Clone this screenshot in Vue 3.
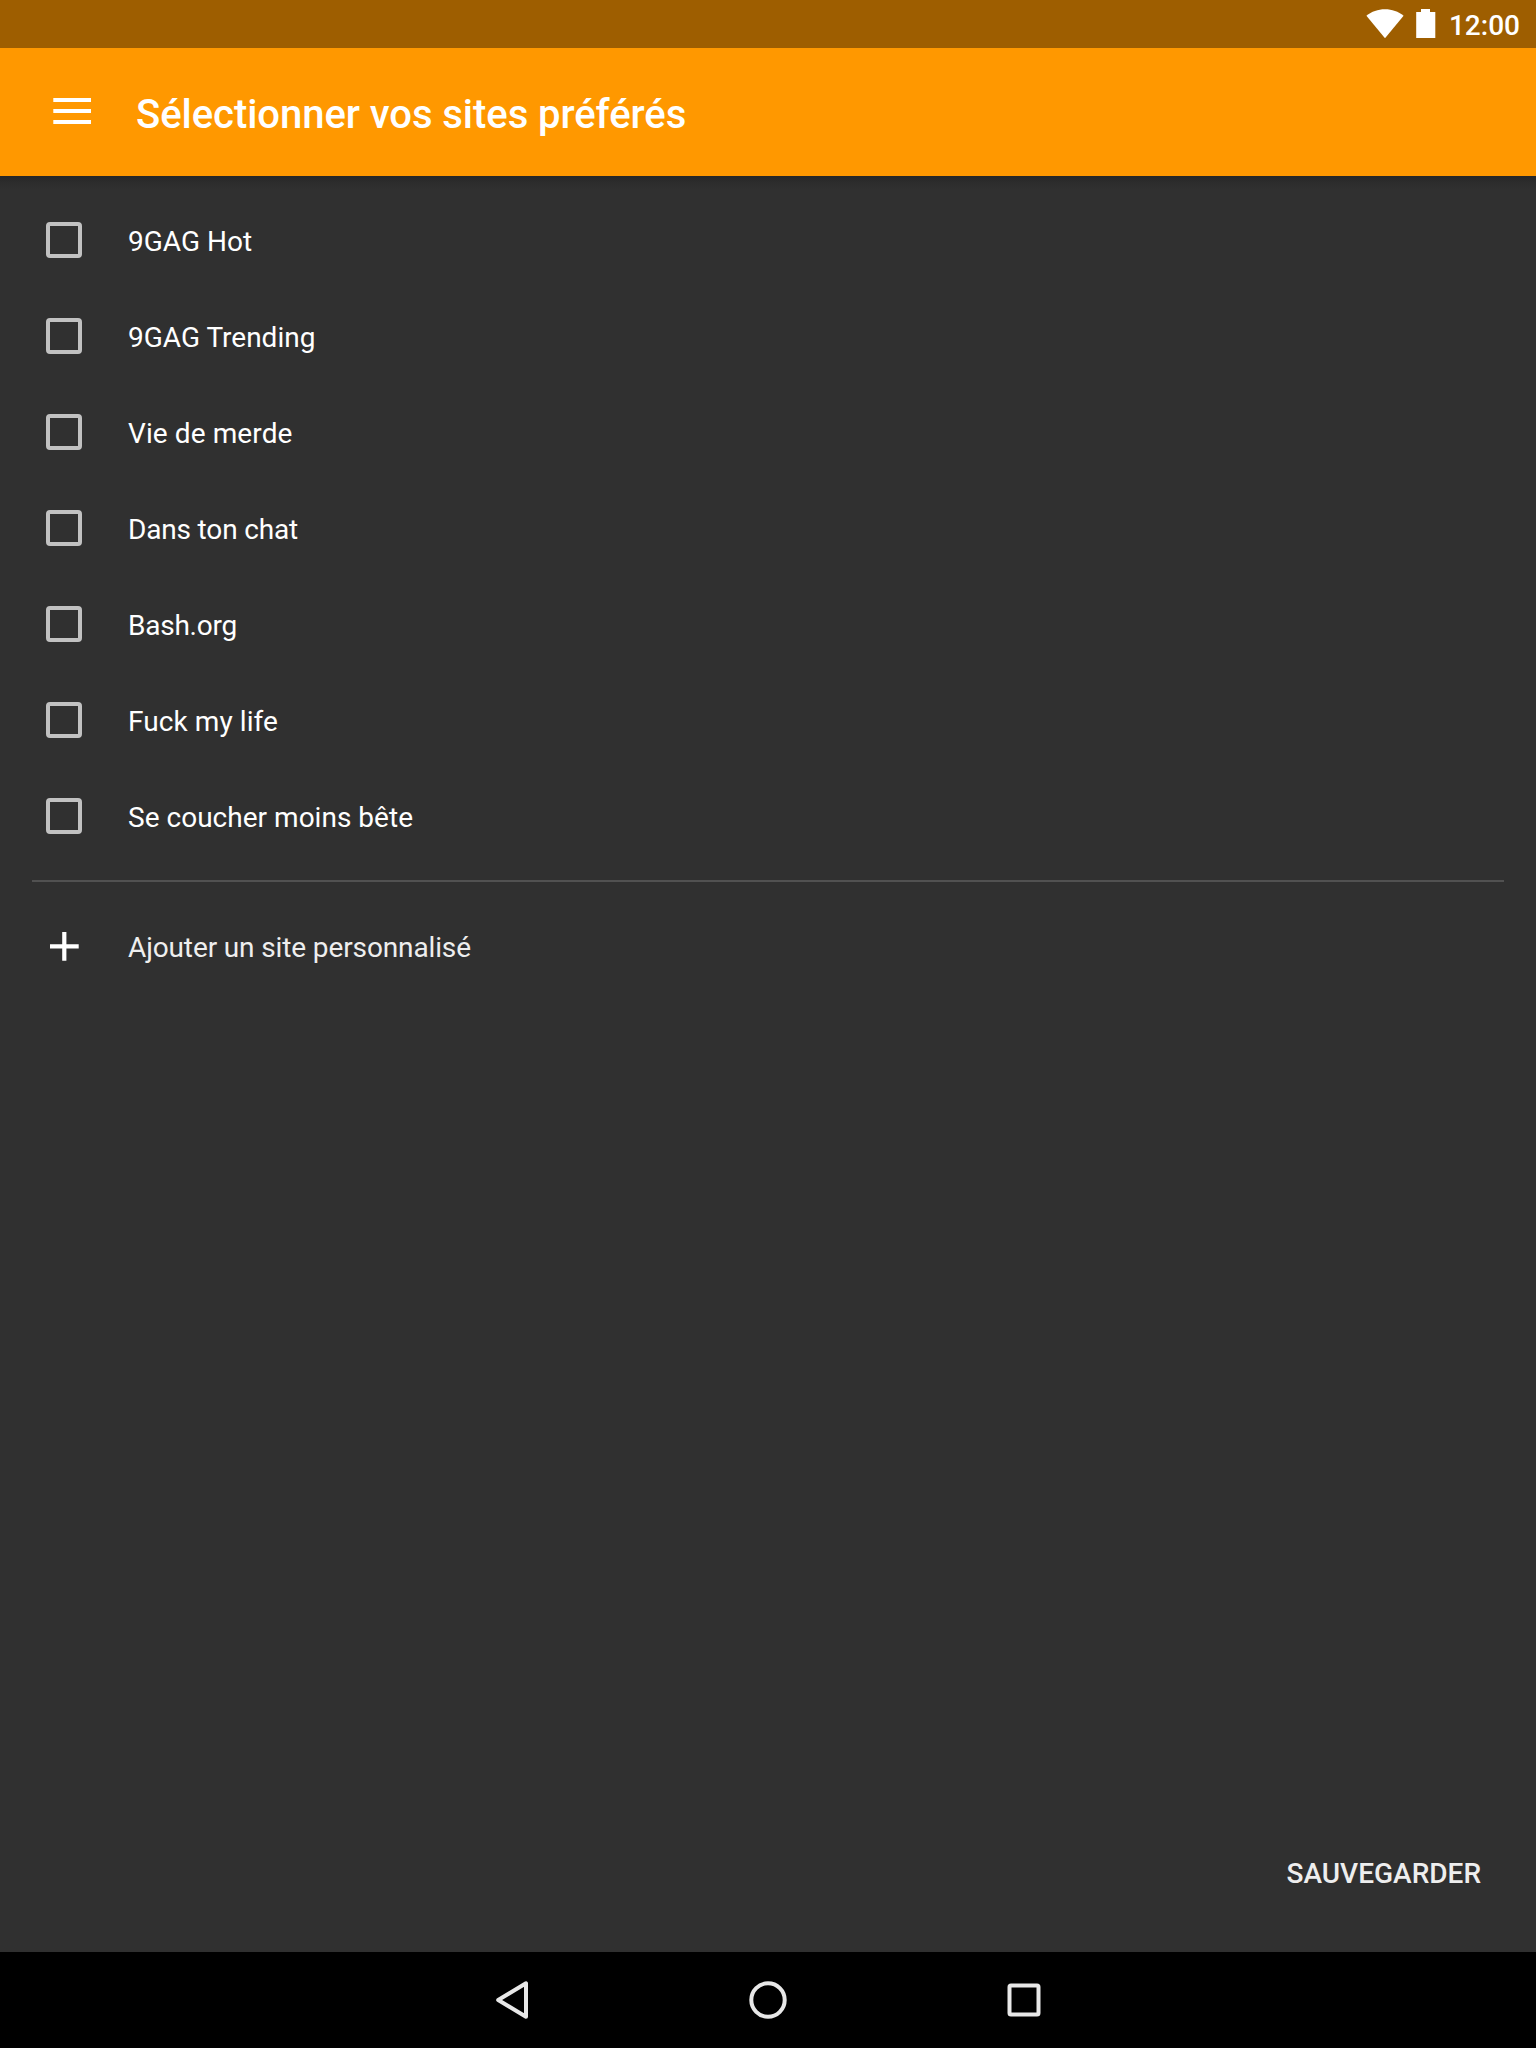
<script setup>
const sites = [
  { name: '9GAG Hot', tracking: 0 },
  { name: '9GAG Trending', tracking: 0 },
  { name: 'Vie de merde', tracking: 0.1 },
  { name: 'Dans ton chat', tracking: -0.17 },
  { name: 'Bash.org', tracking: -0.25 },
  { name: 'Fuck my life', tracking: 0.08 },
  { name: 'Se coucher moins bête', tracking: 0.02 },
]
</script>

<template>
  <div class="screen">
    <div class="status">
      <svg class="wifi" width="38" height="30" viewBox="0 0 38 30">
        <path d="M19 29.2 0.4 6.8C5.6 2.6 12 .3 19 .3s13.400 2.300 18.600 6.500Z" fill="#fff" />
      </svg>
      <svg class="battery" width="20" height="30" viewBox="0 0 20 30">
        <path d="M5 0h9v3h5.300v26H.2V3H5Z" fill="#fff" />
      </svg>
      <span class="clock">12:00</span>
    </div>

    <header class="appbar">
      <svg class="menu" width="38" height="26" viewBox="0 0 38 26">
        <path d="M.3 0H38v4H.3ZM.3 11H38v4H.3ZM.3 22H38v4H.3Z" fill="#fff" />
      </svg>
      <h1 class="title">Sélectionner vos sites préférés</h1>
    </header>

    <main class="content">
      <ul class="list">
        <li v-for="site in sites" :key="site.name" class="row">
          <span class="lead"><span class="box"></span></span>
          <span class="label" :style="{ letterSpacing: site.tracking + 'px' }">{{ site.name }}</span>
        </li>
      </ul>
      <div class="divider"></div>
      <div class="row add">
        <span class="lead">
          <svg class="plus" width="30" height="30" viewBox="0 0 30 30">
            <path d="M12.200 0h4.200v12.200h12.300v4.200H16.400v12.300h-4.200V16.400H0v-4.200h12.200Z" fill="#fff" />
          </svg>
        </span>
        <span class="label">Ajouter un site personnalisé</span>
      </div>
      <div class="actions">
        <button class="save" type="button">SAUVEGARDER</button>
      </div>
    </main>

    <nav class="navbar">
      <svg width="256" height="96" viewBox="0 0 256 96">
        <path d="M142 31.300V64.700L114.200 48Z" fill="none" stroke="#e8e8e8" stroke-width="4" stroke-linejoin="round" />
      </svg>
      <svg width="256" height="96" viewBox="0 0 256 96">
        <circle cx="128" cy="48" r="16.700" fill="none" stroke="#e8e8e8" stroke-width="4" />
      </svg>
      <svg width="256" height="96" viewBox="0 0 256 96">
        <rect x="113.500" y="33.500" width="29" height="29" rx="1.500" fill="none" stroke="#e8e8e8" stroke-width="4" />
      </svg>
    </nav>
  </div>
</template>

<style>
body {
  margin: 0;
  background: #303030;
}
</style>

<style scoped>
.screen {
  width: 1536px;
  height: 2048px;
  display: flex;
  flex-direction: column;
  background: #303030;
  color: #fff;
  font-family: Roboto, sans-serif;
  font-size: 28px;
  overflow: hidden;
}
.status {
  height: 48px;
  flex: none;
  box-sizing: border-box;
  padding-right: 16px;
  display: flex;
  align-items: flex-start;
  justify-content: flex-end;
  background: #9e5e00;
}
.wifi {
  margin: 9px 12px 0 0;
}
.battery {
  margin: 9px 13px 0 0;
}
.clock {
  font-weight: 500;
  line-height: 34px;
  margin-top: 9px;
}
.appbar {
  height: 128px;
  flex: none;
  display: flex;
  align-items: flex-start;
  background: #ff9800;
}
.menu {
  margin: 50px 45px 0 53px;
}
.title {
  margin: 43px 0 0;
  font-size: 40px;
  line-height: 48px;
  font-weight: 500;
  letter-spacing: -0.05px;
}
.content {
  flex: 1;
  display: flex;
  flex-direction: column;
  padding-top: 16px;
  background: linear-gradient(#262626, #2c2c2c 6px, #303030 14px);
}
.list {
  list-style: none;
  margin: 0;
  padding: 0;
}
.row {
  display: flex;
  align-items: center;
  height: 96px;
}
.lead {
  width: 128px;
  display: flex;
  flex: none;
}
.box {
  box-sizing: border-box;
  width: 36px;
  height: 36px;
  margin-left: 46px;
  border: 4px solid #c1c1c1;
  border-radius: 4px;
}
.label {
  line-height: 34px;
  padding-top: 4px;
}
.divider {
  height: 2px;
  margin: 16px 32px 0;
  background: #515151;
}
.add {
  margin-top: 17px;
  color: #eee;
}
.add .label {
  padding-top: 2px;
  letter-spacing: -0.125px;
}
.plus {
  margin-left: 50px;
}
.actions {
  margin-top: auto;
  display: flex;
  justify-content: flex-end;
  padding: 0 55px 61px 0;
}
.save {
  border: 0;
  padding: 0;
  background: none;
  color: #eee;
  font: 500 28px/34px Roboto, sans-serif;
}
.navbar {
  height: 96px;
  flex: none;
  display: flex;
  justify-content: center;
  background: #000;
}
</style>
